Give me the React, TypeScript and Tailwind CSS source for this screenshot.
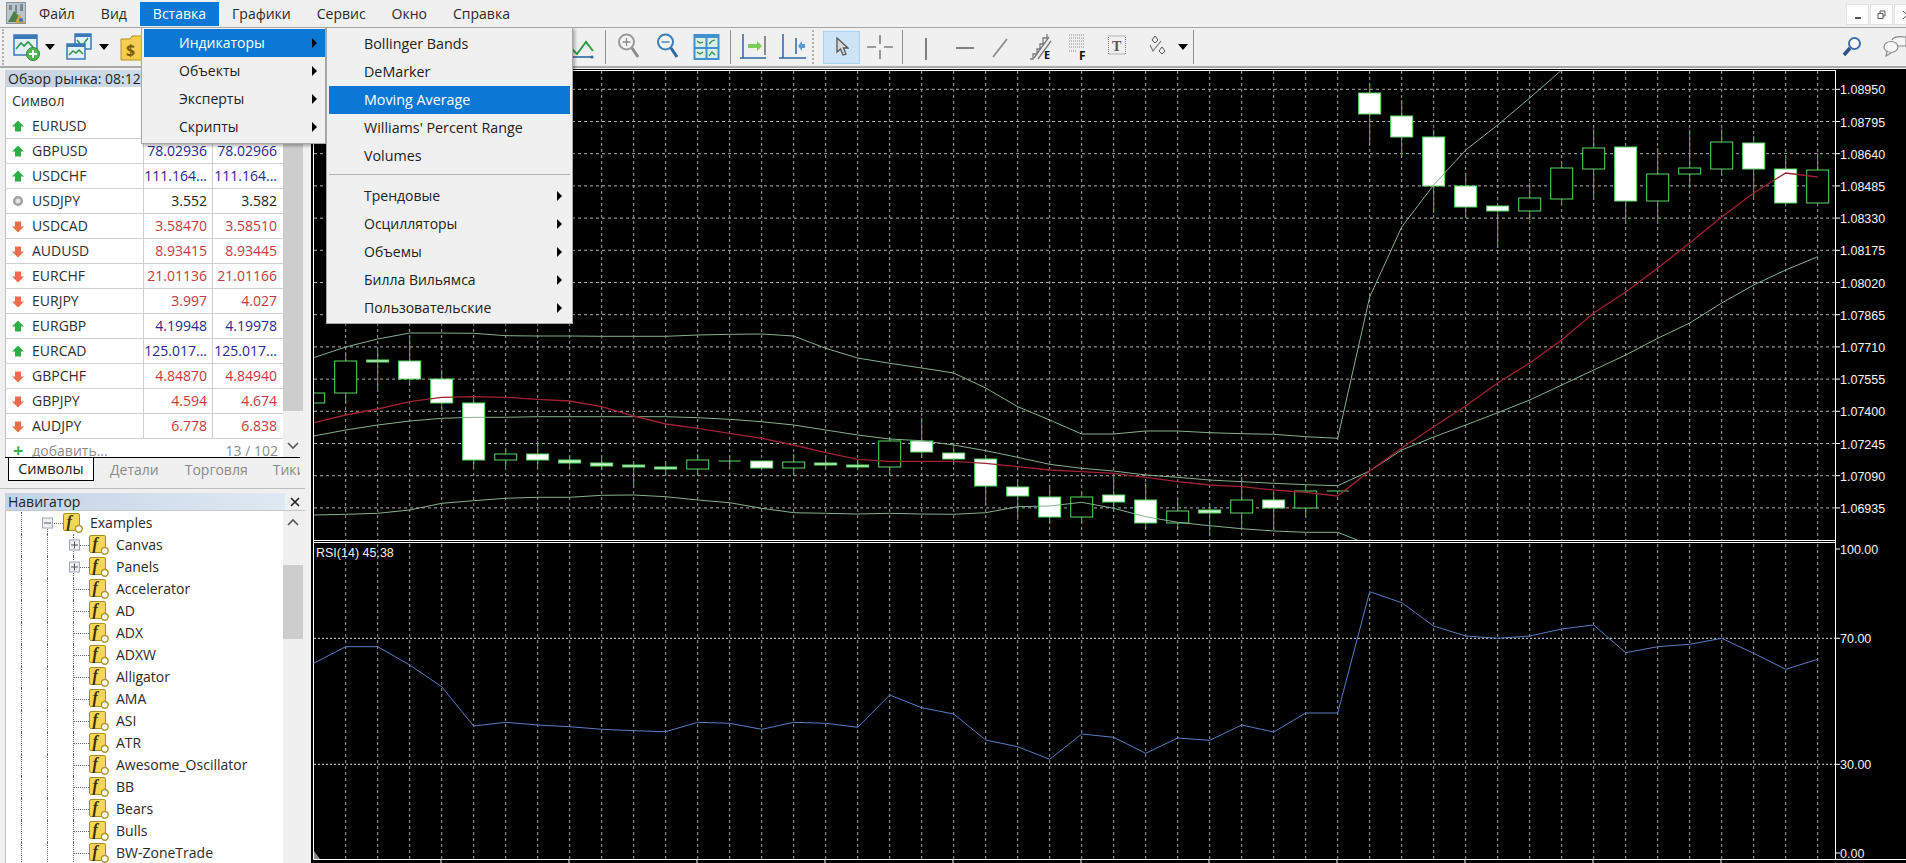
import type { ReactNode } from "react";

const SCALE_MAIN = ["1.08950", "1.08795", "1.08640", "1.08485", "1.08330", "1.08175", "1.08020", "1.07865", "1.07710", "1.07555", "1.07400", "1.07245", "1.07090", "1.06935"];
const SCALE_RSI = [
  { label: "100.00", y: 549 },
  { label: "70.00", y: 638.3 },
  { label: "30.00", y: 764.3 },
  { label: "0.00", y: 853 },
];

type Dir = "up" | "down" | "flat";
// EURUSD prices sit under the open menu, so they stay empty
const QUOTES: { symbol: string; bid: string; ask: string; dir: Dir }[] = [
  { symbol: "EURUSD", bid: "", ask: "", dir: "up" },
  { symbol: "GBPUSD", bid: "78.02936", ask: "78.02966", dir: "up" },
  { symbol: "USDCHF", bid: "111.164...", ask: "111.164...", dir: "up" },
  { symbol: "USDJPY", bid: "3.552", ask: "3.582", dir: "flat" },
  { symbol: "USDCAD", bid: "3.58470", ask: "3.58510", dir: "down" },
  { symbol: "AUDUSD", bid: "8.93415", ask: "8.93445", dir: "down" },
  { symbol: "EURCHF", bid: "21.01136", ask: "21.01166", dir: "down" },
  { symbol: "EURJPY", bid: "3.997", ask: "4.027", dir: "down" },
  { symbol: "EURGBP", bid: "4.19948", ask: "4.19978", dir: "up" },
  { symbol: "EURCAD", bid: "125.017...", ask: "125.017...", dir: "up" },
  { symbol: "GBPCHF", bid: "4.84870", ask: "4.84940", dir: "down" },
  { symbol: "GBPJPY", bid: "4.594", ask: "4.674", dir: "down" },
  { symbol: "AUDJPY", bid: "6.778", ask: "6.838", dir: "down" },
];

const NAV_ITEMS = ["Accelerator", "AD", "ADX", "ADXW", "Alligator", "AMA", "ASI", "ATR", "Awesome_Oscillator", "BB", "Bears", "Bulls", "BW-ZoneTrade"];

// [k, body top, body bottom, wick top, wick bottom, filled]
const CANDLES: [number, number, number, number, number, boolean][] = [
  [-1, 393, 403, 393, 403, false],
  [0, 361, 393, 352, 403, false],
  [1, 360, 362, 350, 390, true],
  [2, 361, 379, 337, 383, true],
  [3, 379, 403, 370, 410, true],
  [4, 403, 460, 398, 468, true],
  [5, 454, 460, 448, 467, false],
  [6, 454, 460, 441, 468, true],
  [7, 460, 463, 455, 468, true],
  [8, 463, 466, 455, 470, true],
  [9, 465, 467, 463, 486, true],
  [10, 467, 469, 462, 475, true],
  [11, 460, 469, 454, 475, false],
  [12, 461, 461, 455, 468, true],
  [13, 461, 468, 461, 468, true],
  [14, 462, 468, 454, 475, false],
  [15, 463, 465, 455, 468, true],
  [16, 465, 467, 460, 470, true],
  [17, 441, 467, 437, 475, false],
  [18, 441, 452, 418, 458, true],
  [19, 453, 459, 445, 465, true],
  [20, 459, 486, 455, 505, true],
  [21, 487, 496, 480, 520, true],
  [22, 497, 517, 488, 523, true],
  [23, 497, 517, 492, 523, false],
  [24, 495, 502, 473, 512, true],
  [25, 500, 523, 483, 528, true],
  [26, 511, 523, 497, 528, false],
  [27, 510, 513, 505, 535, true],
  [28, 500, 513, 477, 527, false],
  [29, 500, 508, 493, 530, true],
  [30, 491, 508, 485, 517, false],
  [31, 491, 491, 491, 491, true],
  [32, 93, 114, 83, 144, true],
  [33, 116, 137, 100, 157, true],
  [34, 137, 186, 130, 213, true],
  [35, 186, 207, 173, 217, true],
  [36, 206, 211, 206, 247, true],
  [37, 198, 211, 183, 220, false],
  [38, 168, 199, 163, 204, false],
  [39, 148, 169, 129, 198, false],
  [40, 147, 201, 147, 223, true],
  [41, 174, 201, 148, 223, false],
  [42, 168, 174, 130, 187, false],
  [43, 142, 169, 129, 176, false],
  [44, 143, 169, 136, 197, true],
  [45, 169, 203, 157, 203, true],
  [46, 170, 203, 153, 203, false],
];

const BAND_UP = [357.7, 347, 339, 333, 333, 333.3, 335.7, 336, 336, 336.3, 336.3, 336.3, 335, 334.3, 334, 336, 348.3, 358, 363.3, 368, 373, 388, 406.7, 420, 434, 434, 431, 431, 432.7, 433.7, 434.3, 436.7, 438.3, 297, 227, 185, 150, 125, 98, 70, 42];
const BAND_MID = [436, 430, 425, 421, 418.3, 417.3, 417.3, 416.7, 416.7, 416.7, 416.7, 416.7, 417.7, 419.3, 421.7, 425, 430, 435, 439, 440.7, 445, 450.7, 457.3, 464.3, 468.3, 471, 475, 477.3, 480, 481.7, 483.3, 484.7, 485.7, 471, 450, 437, 425, 412.7, 400, 385, 370, 355, 338.3, 323, 303, 285, 270, 256.7];
const BAND_LOW = [515, 514.3, 513.3, 510, 503.3, 500.7, 498.3, 497.3, 497.3, 495.3, 495, 496.7, 500, 502.7, 508.3, 512.7, 513.3, 514, 513.3, 514, 514.3, 512.7, 506.7, 506, 502.3, 508.3, 516.7, 522.3, 525.7, 528.7, 531, 532.3, 532.3, 545];
const MA = [422.7, 415, 409, 401.7, 397.3, 396.7, 397.3, 399.3, 401, 406.7, 416, 424, 428.3, 433.3, 438.3, 445, 452.7, 459.3, 461.3, 461.3, 461.3, 463.3, 466.7, 470, 471.7, 473.3, 477.3, 481.7, 485, 486.7, 490, 492.3, 496, 471, 448, 426.7, 406, 383, 363, 340, 313, 292, 268, 243, 217, 193, 173, 177];
const RSI = [663.3, 646.7, 646.7, 665, 686.7, 726, 722.3, 725, 726.7, 729.3, 730.7, 731.7, 722.3, 723.3, 729.3, 722.3, 723.3, 727.3, 695, 707.7, 714, 740, 746.7, 759.3, 734, 737.3, 753.3, 738, 740.3, 725, 732, 713, 713, 591.7, 602.7, 626, 636, 638.3, 636, 629, 625, 652.7, 646.7, 644.3, 638.3, 653.3, 669.3, 659.3];

const gridX = (k: number) => 345.7 + 32 * k;
const points = (ys: number[]) => ys.map((y, i) => `${gridX(i - 1)},${y}`).join(" ");
const GRID_KS = Array.from({ length: 47 }, (_, i) => i);

function Chart() {
  return (
    <svg viewBox="305 68 1601 795" className="block h-[795px] w-[1601px] shrink-0" style={{ fontFamily: "'Liberation Sans', sans-serif" }}>
      <defs>
        <clipPath id="main-plot">
          <rect x="314" y="71" width="1521" height="469" />
        </clipPath>
      </defs>
      <rect x="311" y="69" width="1595" height="794" fill="#000" />
      {GRID_KS.map((k) => (
        <g key={k} stroke="#a0a0a0" strokeDasharray="3 3">
          <line x1={gridX(k)} y1="71" x2={gridX(k)} y2="540" />
          <line x1={gridX(k)} y1="544" x2={gridX(k)} y2="859" />
        </g>
      ))}
      {SCALE_MAIN.map((label, i) => {
        const y = 89.3 + i * 32.2;
        return (
          <g key={label}>
            <line x1="314" y1={y} x2="1835" y2={y} stroke="#b0b0b0" strokeDasharray="3 3" />
            <line x1="1835" y1={y} x2="1840" y2={y} stroke="#fff" />
            <text x="1840" y={y + 5} fontSize="12.5" fill="#f4f4f4">{label}</text>
          </g>
        );
      })}
      <g clipPath="url(#main-plot)">
        {CANDLES.map(([k, top, bottom, wickTop, wickBottom, filled]) => {
          const height = bottom - top;
          return (
            <g key={k}>
              <line x1={gridX(k)} y1={wickTop} x2={gridX(k)} y2={wickBottom} stroke="#35c43f" />
              {height === 0 ? (
                <line x1={gridX(k) - 11} y1={top} x2={gridX(k) + 11} y2={top} stroke="#5fd768" />
              ) : (
                <rect x={gridX(k) - 11} y={top} width="22" height={height} fill={filled ? (height <= 3 ? "#c4f6c8" : "#fff") : "#000"} stroke="#5fd768" />
              )}
            </g>
          );
        })}
        <polyline points={points(BAND_UP)} fill="none" stroke="#86b090" />
        <polyline points={points(BAND_MID)} fill="none" stroke="#86b090" />
        <polyline points={points(BAND_LOW)} fill="none" stroke="#86b090" />
        <polyline points={points(MA)} fill="none" stroke="#a02232" strokeWidth="1.3" />
      </g>
      <rect x="1835" y="70" width="1" height="789" fill="#fff" />
      <rect x="313" y="70" width="1" height="789" fill="#fff" />
      <rect x="313" y="70" width="1522" height="1" fill="#fff" />
      <rect x="313" y="540" width="1522" height="1" fill="#fff" />
      <rect x="313" y="542" width="1522" height="1" fill="#fff" />
      <rect x="313" y="859" width="1593" height="1" fill="#fff" />
      <text x="316" y="557" fontSize="12.5" fill="#f0f0f0">RSI(14) 45.38</text>
      <line x1="314" y1="638.3" x2="1835" y2="638.3" stroke="#dcdcdc" strokeDasharray="2 2" />
      <line x1="314" y1="764.3" x2="1835" y2="764.3" stroke="#dcdcdc" strokeDasharray="2 2" />
      {SCALE_RSI.map(({ label, y }) => (
        <g key={label}>
          <line x1="1835" y1={y} x2="1840" y2={y} stroke="#fff" />
          <text x="1840" y={y + 5} fontSize="12.5" fill="#f4f4f4">{label}</text>
        </g>
      ))}
      <polyline points={points(RSI)} fill="none" stroke="#5a7cc4" />
      <polygon points="314,851 314,859 320,859" fill="#8a8a8a" />
      {[441, 569, 697, 825, 953, 1081, 1209, 1337, 1465, 1593, 1721].map((x) => (
        <line key={x} x1={x} y1="860" x2={x} y2="863" stroke="#fff" />
      ))}
    </svg>
  );
}

function DirIcon({ dir }: { dir: Dir }) {
  if (dir === "flat") {
    return (
      <svg width="12" height="12" viewBox="0 0 12 12">
        <circle cx="6" cy="6" r="3.8" fill="#e4e4e4" stroke="#a2a2a2" strokeWidth="2.6" />
      </svg>
    );
  }
  return (
    <svg width="12" height="13" viewBox="0 0 12 13">
      {dir === "up" ? (
        <path d="M6 .5 12 6.5H9V11.5H3V6.5H0Z" fill="#2fae47" />
      ) : (
        <path d="M6 12.5 12 6.5H9V1.5H3V6.5H0Z" fill="#ea6e4d" />
      )}
    </svg>
  );
}

function FuncIcon() {
  return (
    <svg width="20" height="20" viewBox="0 0 20 20" className="shrink-0">
      <rect x=".5" y=".5" width="16" height="17" rx="1.5" fill="#f4d658" stroke="#a88e1e" />
      <text x="3.5" y="14" fontSize="16" fontWeight="700" fontStyle="italic" fill="#3a3208" style={{ fontFamily: "'Liberation Serif', serif" }}>f</text>
      <circle cx="15.8" cy="15.8" r="3.4" fill="#fff" stroke="#b0982a" strokeWidth="1.5" />
    </svg>
  );
}

function TreeBox({ open }: { open?: boolean }) {
  return (
    <span className="absolute left-[-5px] top-1/2 flex h-[11px] w-[11px] -translate-y-1/2 items-center justify-center border border-[#a0a8b0] bg-[#eef1f4]">
      <span className="h-px w-[7px] bg-[#555]" />
      {!open && <span className="absolute h-[7px] w-px bg-[#555]" />}
    </span>
  );
}

function NavRow({ label, folder }: { label: string; folder?: boolean }) {
  return (
    <div className="flex h-[22px] items-stretch">
      <div className="w-[15px] shrink-0" />
      <div className="w-[26px] shrink-0 border-l border-dotted border-[#666]" />
      <div className="w-[26px] shrink-0 border-l border-dotted border-[#666]" />
      <div className="relative w-[16px] shrink-0 border-l border-dotted border-[#666]">
        <span className="absolute left-0 right-0 top-1/2 border-t border-dotted border-[#666]" />
        {folder && <TreeBox />}
      </div>
      <div className="flex items-center">
        <FuncIcon />
        <span className="ml-[7px] leading-none text-[#2a2a2a]">{label}</span>
      </div>
    </div>
  );
}

function Chevron({ up }: { up?: boolean }) {
  return (
    <svg width="12" height="8" viewBox="0 0 12 8" fill="none" stroke="#555" strokeWidth="1.6" className="shrink-0">
      <path d={up ? "M1 7 6 2l5 5" : "M1 1l5 5 5-5"} />
    </svg>
  );
}

function MarketWatch() {
  return (
    <div className="flex h-[420px] shrink-0 flex-col pl-[5px]">
      <div className="mt-[2px] flex h-[17px] shrink-0 items-center bg-gradient-to-r from-[#c5d3e2] to-[#d9e4ee] pl-[3px] text-[#1f1f1f]">
        Обзор рынка: 08:12
      </div>
      <div className="flex h-[370px] shrink-0 overflow-hidden">
        <div className="h-full w-[278px] shrink-0 border-l border-[#c0c0c0] bg-white">
          <div className="flex h-[27px] items-center pl-[6px] text-[#333]">Символ</div>
          {QUOTES.map((q) => {
            const color = q.dir === "up" ? "text-[#29298f]" : q.dir === "down" ? "text-[#c23a40]" : "text-[#222]";
            return (
              <div key={q.symbol} className="flex h-[25px] items-center border-b border-[#cfcfcf]">
                <div className="flex w-[137px] items-center pl-[6px] text-[#2f2f2f]">
                  <DirIcon dir={q.dir} />
                  <span className="ml-[8px]">{q.symbol}</span>
                </div>
                <div className={`h-full w-[69px] border-l border-[#cfcfcf] pr-[5px] text-right leading-[24px] ${color}`}>{q.bid}</div>
                <div className={`h-full w-[71px] border-l border-[#cfcfcf] pr-[6px] text-right leading-[24px] ${color}`}>{q.ask}</div>
              </div>
            );
          })}
          <div className="flex h-[18px] items-start pl-[7px] pr-[5px] leading-[24px] text-[#8c8c8c]">
            <span className="text-[18px] font-bold leading-[22px] text-[#35b04a]">+</span>
            <span className="ml-[9px]">добавить...</span>
            <span className="ml-auto">13 / 102</span>
          </div>
        </div>
        <div className="flex h-full w-[20px] flex-col items-center bg-[#f0f0f0]">
          <div className="mt-[23px] h-[301px] w-full shrink-0 bg-[#cdcdcd]" />
          <div className="mt-[31px] leading-none"><Chevron /></div>
        </div>
      </div>
      <div className="relative z-10 flex h-[24px] w-[295px] shrink-0 items-stretch border-t border-black pl-[3px] text-[#8a8a8a]">
        <div className="flex w-[89px] items-center justify-center border-x border-b border-black bg-white text-[14.5px] text-[#222]">Символы</div>
        <div className="flex overflow-hidden">
          <span className="self-center pl-[16px] pr-[13px]">Детали</span>
          <span className="my-[3px] w-px bg-[#9a9a9a]" />
          <span className="self-center pl-[13px] pr-[12px]">Торговля</span>
          <span className="my-[3px] w-px bg-[#9a9a9a]" />
          <span className="self-center whitespace-nowrap pl-[13px]">Тики</span>
        </div>
      </div>
    </div>
  );
}

function Navigator() {
  return (
    <div className="flex min-h-0 flex-1 flex-col border-t border-[#bdbdbd] pl-[5px] pt-[4px]">
      <div className="flex h-[17px] shrink-0 items-center">
        <div className="flex h-full w-[280px] items-center bg-gradient-to-r from-[#c4d4e6] to-[#dfe9f3] pl-[3px] text-[#1f1f1f]">Навигатор</div>
        <div className="flex w-[20px] justify-center">
          <svg width="10" height="10" viewBox="0 0 10 10" stroke="#222" strokeWidth="1.6"><path d="M1 1l8 8M9 1 1 9" /></svg>
        </div>
      </div>
      <div className="flex min-h-0 flex-1 border-t border-[#c8c8c8]">
        <div className="w-[278px] shrink-0 overflow-hidden border-l border-[#c0c0c0] bg-white pt-[1px]">
          <div className="flex h-[22px] items-stretch">
            <div className="w-[15px] shrink-0" />
            <div className="w-[26px] shrink-0 border-l border-dotted border-[#666]" />
            <div className="relative w-[16px] shrink-0">
              <span className="absolute bottom-0 left-0 top-1/2 border-l border-dotted border-[#666]" />
              <span className="absolute left-0 right-0 top-1/2 border-t border-dotted border-[#666]" />
              <TreeBox open />
            </div>
            <div className="flex items-center">
              <FuncIcon />
              <span className="ml-[7px] leading-none text-[#2a2a2a]">Examples</span>
            </div>
          </div>
          <NavRow label="Canvas" folder />
          <NavRow label="Panels" folder />
          {NAV_ITEMS.map((item) => (
            <NavRow key={item} label={item} />
          ))}
        </div>
        <div className="flex w-[20px] flex-col items-center bg-[#f0f0f0] pt-[7px]">
          <Chevron up />
          <div className="mt-[39px] h-[74px] w-full shrink-0 bg-[#cdcdcd]" />
        </div>
      </div>
    </div>
  );
}

function MenuArrow() {
  return <span className="ml-auto h-0 w-0 border-y-[5px] border-l-[5px] border-y-transparent border-l-black" />;
}

function MenuItem({ label, active, sub, inset }: { label: string; active?: boolean; sub?: boolean; inset: string }) {
  return (
    <div className={`flex h-[28px] items-center pr-[8px] ${inset} ${active ? "bg-[#0a78d4] text-white" : "text-[#222]"}`}>
      <span>{label}</span>
      {sub && <MenuArrow />}
    </div>
  );
}

function InsertMenus() {
  return (
    <>
      <div className="absolute left-[141px] top-[27px] z-30 h-[117px] w-[185px] border border-[#a8a8a8] bg-[#f0f0f0] pl-[2px] pt-[1px] shadow-[2px_2px_3px_rgba(0,0,0,0.3)]">
        <MenuItem label="Индикаторы" sub active inset="pl-[35px]" />
        <MenuItem label="Объекты" sub inset="pl-[35px]" />
        <MenuItem label="Эксперты" sub inset="pl-[35px]" />
        <MenuItem label="Скрипты" sub inset="pl-[35px]" />
      </div>
      <div className="absolute left-[326px] top-[27px] z-30 h-[297px] w-[247px] border border-[#a8a8a8] bg-[#f0f0f0] px-[2px] pt-[2px] shadow-[2px_2px_3px_rgba(0,0,0,0.3)]">
        <div className="text-[14.3px]">
          <MenuItem label="Bollinger Bands" inset="pl-[35px]" />
          <MenuItem label="DeMarker" inset="pl-[35px]" />
          <MenuItem label="Moving Average" active inset="pl-[35px]" />
          <MenuItem label="Williams' Percent Range" inset="pl-[35px]" />
          <MenuItem label="Volumes" inset="pl-[35px]" />
        </div>
        <div className="my-[4px] h-px bg-[#b4b4b4]" />
        <div className="h-[3px]" />
        {["Трендовые", "Осцилляторы", "Объемы", "Билла Вильямса", "Пользовательские"].map((label) => (
          <MenuItem key={label} label={label} sub inset="pl-[35px]" />
        ))}
      </div>
    </>
  );
}

function MenuBar() {
  const items = ["Файл", "Вид", "Вставка", "Графики", "Сервис", "Окно", "Справка"];
  return (
    <div className="flex h-[28px] shrink-0 items-start border-b border-[#a6a6a6] pt-[2px]">
      <div className="ml-[6px] w-[20px]">
        <svg width="20" height="23" viewBox="0 0 20 23">
          <rect x=".5" y=".5" width="19" height="21" fill="#b9c4cc" stroke="#8a949c" />
          <rect x="3" y="3" width="3" height="5" fill="#7a8890" />
          <rect x="9" y="3" width="2" height="8" fill="#7a8890" />
          <rect x="14" y="2" width="3" height="7" fill="#7a8890" />
          <path d="M2 20 8 9l4 4 5 7Z" fill="#4d7f4a" />
          <path d="M9 21 13 12l3 4 3 5Z" fill="#d2a63a" />
          <circle cx="15" cy="18" r="2" fill="#3a78c2" />
        </svg>
      </div>
      {items.map((item) => (
        <div key={item} className={`flex h-[24px] items-center px-[13px] ${item === "Вставка" ? "bg-[#0a78d4] text-white" : "text-[#2a2a2a]"}`}>
          {item}
        </div>
      ))}
      <div className="ml-auto mt-[2px] flex gap-[1px]">
        <div className="flex h-[21px] w-[23px] items-end justify-center border border-[#e2e2e2] bg-white pb-[5px]"><span className="h-[2px] w-[6px] bg-[#555]" /></div>
        <div className="flex h-[21px] w-[23px] items-center justify-center border border-[#e2e2e2] bg-white">
          <svg width="9" height="10" viewBox="0 0 9 10" fill="none" stroke="#555"><path d="M3 3V1h5v5H6M1 3.5h5v5H1z" /></svg>
        </div>
        <div className="flex h-[21px] w-[12px] items-center overflow-hidden border-y border-l border-[#e2e2e2] bg-white pl-[8px]">
          <svg width="8" height="8" viewBox="0 0 8 8" className="shrink-0" stroke="#555"><path d="M0 0l8 8M8 0 0 8" /></svg>
        </div>
      </div>
    </div>
  );
}

function Sep({ ml, dotted }: { ml: string; dotted?: boolean }) {
  return <span className={`${ml} h-[34px] shrink-0 ${dotted ? "w-[3px] border-l-2 border-dotted border-[#b0b0b0]" : "w-px bg-[#8e8e8e]"}`} />;
}

function Tool({ w, ml, children }: { w: number; ml: string; children: ReactNode }) {
  return (
    <svg width={w} height="30" viewBox={`0 0 ${w} 30`} fill="none" className={`${ml} shrink-0`}>
      {children}
    </svg>
  );
}

function DropArrow({ ml }: { ml: string }) {
  return <span className={`${ml} h-0 w-0 shrink-0 border-x-[5px] border-t-[6px] border-x-transparent border-t-black`} />;
}

function Toolbar() {
  return (
    <div className="flex h-[40px] shrink-0 items-center border-b-2 border-[#a8a8a8]">
      <span className="ml-[2px] h-[36px] w-[3px] shrink-0 border-l-2 border-dotted border-[#b0b0b0]" />
      <Tool w={28} ml="ml-[7px]">
        <rect x="2" y="3" width="23" height="20" fill="#e4f0fa" stroke="#3a7ab8" strokeWidth="1.5" />
        <rect x="2" y="3" width="23" height="4" fill="#3a7ab8" />
        <path d="M4 17l5-6 3 3 4-4 5 5" stroke="#2c9a40" strokeWidth="1.6" />
        <circle cx="21" cy="22" r="6.5" fill="#4fb84f" stroke="#2c8a30" />
        <path d="M21 18v8M17 22h8" stroke="#fff" strokeWidth="2" />
      </Tool>
      <DropArrow ml="ml-[5px]" />
      <Tool w={27} ml="ml-[11px]">
        <rect x="9" y="2" width="16" height="15" fill="#e4f0fa" stroke="#3a7ab8" strokeWidth="1.5" />
        <rect x="9" y="2" width="16" height="3" fill="#3a7ab8" />
        <path d="M11 8l5 6 6-8" stroke="#2c9a40" strokeWidth="1.5" />
        <rect x="1" y="12" width="18" height="15" fill="#e4f0fa" stroke="#3a7ab8" strokeWidth="1.5" />
        <rect x="1" y="12" width="18" height="3" fill="#3a7ab8" />
        <path d="M3 23l4-4 3 2 3-3 4 4" stroke="#2c9a40" strokeWidth="1.5" />
      </Tool>
      <DropArrow ml="ml-[6px]" />
      <Tool w={26} ml="ml-[11px]">
        <path d="M1 7h9l2-3h13v24H1Z" fill="#f4cd52" stroke="#b88f1e" />
        <text x="6" y="24" fontSize="16" fontWeight="700" fill="#7a5a08">$</text>
      </Tool>
      <Tool w={32} ml="ml-[416px]">
        <path d="M0 20l7-6 8 8 9-12 7 9" stroke="#2f9e41" strokeWidth="2" />
        <path d="M0 25h30" stroke="#2d67a8" strokeWidth="1.6" />
        <circle cx="30" cy="25" r="1.6" fill="#2d67a8" />
      </Tool>
      <Sep ml="ml-[11px]" />
      <Tool w={24} ml="ml-[11px]">
        <circle cx="9.5" cy="10" r="7.5" fill="#f4f4f4" stroke="#9a9a9a" strokeWidth="2" />
        <path d="M9.5 6v8M5.5 10h8" stroke="#8a8a8a" strokeWidth="1.3" />
        <path d="M15 16l6 9" stroke="#8a8a8a" strokeWidth="3" />
      </Tool>
      <Tool w={24} ml="ml-[15px]">
        <circle cx="9.5" cy="10" r="7.5" fill="#f4f4f4" stroke="#3d7fb8" strokeWidth="2" />
        <path d="M5.5 10h8" stroke="#3d7fb8" strokeWidth="1.4" />
        <path d="M15 16l6 9" stroke="#2c68a2" strokeWidth="3" />
      </Tool>
      <Tool w={27} ml="ml-[13px]">
        <rect x=".5" y="2" width="26" height="26" fill="#3f92cf" />
        <rect x="2.5" y="6" width="10" height="9" fill="#dcefe4" />
        <rect x="14.5" y="6" width="10" height="9" fill="#dcefe4" />
        <rect x="2.5" y="17" width="10" height="9" fill="#dcefe4" />
        <rect x="14.5" y="17" width="10" height="9" fill="#dcefe4" />
        <path d="M4 9l3 2 3-1M16 12l3-3 3-1M4 20l3 2 3-2M16 24l3-4 3 3" stroke="#2f8a44" strokeWidth="1.2" />
      </Tool>
      <Sep ml="ml-[10px]" />
      <Tool w={26} ml="ml-[9px]">
        <path d="M3 2v24M0 26h26" stroke="#2d67a8" strokeWidth="1.5" />
        <path d="M25 4v19" stroke="#555" strokeWidth="1.3" />
        <path d="M8 12h9V9l5 5-5 5v-3H8Z" fill="#7ccc5a" />
      </Tool>
      <Tool w={28} ml="ml-[13px]">
        <path d="M4 2v24M0 26h27M17 6v16" stroke="#2d67a8" strokeWidth="1.5" />
        <path d="M26 12h-3V9l-4 5 4 5v-3h3Z" fill="#5c9ad6" />
      </Tool>
      <Sep ml="ml-[5px]" dotted />
      <div className="ml-[8px] flex h-[33px] w-[37px] shrink-0 items-center justify-center border border-[#a9d3f3] bg-[#cce4f7]">
        <svg width="14" height="20" viewBox="0 0 14 20"><path d="M2 1v14l3.5-3 2.5 6 3-1-2.5-6H13Z" fill="#d8d8d8" stroke="#555" strokeWidth="1.3" /></svg>
      </div>
      <Tool w={26} ml="ml-[7px]">
        <path d="M13 3v9M13 18v9M0 15h9M17 15h9" stroke="#808080" strokeWidth="1.6" />
      </Tool>
      <Sep ml="ml-[9px]" />
      <Tool w={4} ml="ml-[21px]"><path d="M2 6v22" stroke="#808080" strokeWidth="2" /></Tool>
      <Tool w={18} ml="ml-[28px]"><path d="M0 16h18" stroke="#808080" strokeWidth="2" /></Tool>
      <Tool w={16} ml="ml-[18px]"><path d="M1 25 15 7" stroke="#909090" strokeWidth="2" /></Tool>
      <Tool w={24} ml="ml-[21px]">
        <path d="M1 27h3v-5h4v-5h3v-5h3V6h4V2M5 26 20 5M9 27 22 9" stroke="#7a7a7a" strokeWidth="1.3" />
        <text x="15" y="27" fontSize="11" fontWeight="700" fill="#111">E</text>
      </Tool>
      <Tool w={22} ml="ml-[14px]">
        <path d="M2 3h16M2 6h16M2 9h16M2 12h16M2 15h16M2 19h8" stroke="#888" strokeDasharray="1 1" />
        <text x="12" y="28" fontSize="12" fontWeight="700" fill="#111">F</text>
      </Tool>
      <Tool w={20} ml="ml-[18px]">
        <rect x="1.5" y="4" width="17" height="18" stroke="#777" strokeDasharray="1 1" />
        <text x="5" y="19" fontSize="14" fontWeight="700" fill="#555" style={{ fontFamily: "'Liberation Serif', serif" }}>T</text>
      </Tool>
      <Tool w={20} ml="ml-[20px]">
        <path d="M5 8l3-4 3 4-3 3ZM15 22l3-3-3-4-3 4Z" stroke="#555" />
        <path d="M3 13l3 6 8-10" stroke="#777" strokeWidth="1.2" />
      </Tool>
      <DropArrow ml="ml-[11px]" />
      <Sep ml="ml-[5px]" />
      <div className="ml-auto flex shrink-0 items-center">
        <svg width="20" height="22" viewBox="0 0 20 22" fill="none">
          <circle cx="12.5" cy="7.5" r="5.5" fill="#fff" stroke="#3f6ea8" strokeWidth="2" />
          <path d="M8 12 2 19" stroke="#28548c" strokeWidth="3.5" />
        </svg>
        <svg width="23" height="24" viewBox="0 0 23 24" fill="none" className="ml-[21px]" stroke="#8a8a8a" strokeWidth="1.2">
          <path d="M9 5c1-3 6-4 14-3v9H14" fill="#f6f6f6" />
          <ellipse cx="8" cy="12" rx="7" ry="5.5" fill="#f6f6f6" />
          <path d="M4 17l-1 4 5-3" fill="#f6f6f6" />
        </svg>
      </div>
    </div>
  );
}

export default function App() {
  return (
    <div className="relative flex h-[863px] w-[1906px] flex-col overflow-hidden bg-[#f0f0f0] font-['Open_Sans',sans-serif] text-[14px] leading-none">
      <MenuBar />
      <Toolbar />
      <div className="flex min-h-0 flex-1">
        <div className="flex h-full w-[305px] shrink-0 flex-col">
          <MarketWatch />
          <Navigator />
        </div>
        <Chart />
      </div>
      <InsertMenus />
    </div>
  );
}
